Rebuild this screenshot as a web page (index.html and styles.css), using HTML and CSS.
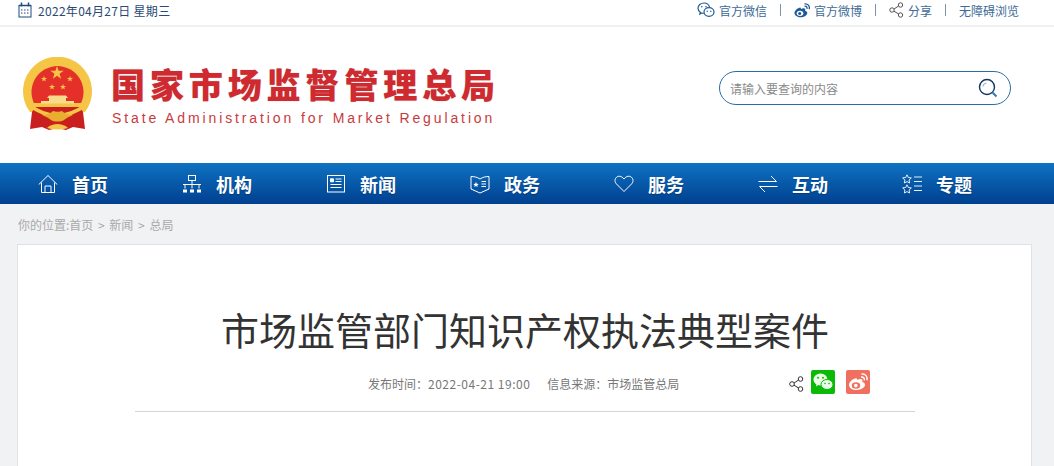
FILE: index.html
```html
<!DOCTYPE html>
<html lang="zh-CN">
<head>
    <meta charset="UTF-8">
    <meta name="viewport" content="width=device-width, initial-scale=1.0">
    <title>市场监管部门知识产权执法典型案件</title>
    <link rel="stylesheet" href="styles.css">
</head>
<body>
    <!-- Top bar -->
    <div class="topbar">
        <div class="date">
            <svg class="date-icon" width="14" height="16" viewBox="0 0 14 16" fill="none" stroke="#1d4a80">
                <rect x="1" y="3.500" width="12" height="11.500"/>
                <path d="M3.500 0.500v4M10.500 0.500v4M1 3.500h12" stroke-width="1.500"/>
                <path d="M3 8h2M6 8h2M9 8h2M3 11h2M6 11h2M9 11h2" stroke-dasharray="1.500 1"/>
            </svg>
            <span>2022年04月27日 星期三</span>
        </div>
        <div class="toplinks">
            <span class="toplink">
                <svg width="18" height="16" viewBox="0 0 18 16" fill="none" stroke="#1d5a96" stroke-width="1.200">
                    <path d="M12.500 5.200C12 2.800 9.800 1 7 1 3.700 1 1 3.300 1 6.200c0 1.700.9 3.100 2.300 4.100l-.5 1.700 2-1c.6.200 1.200.3 1.900.3"/>
                    <ellipse cx="12" cy="10" rx="5" ry="4.300"/>
                    <circle cx="4.800" cy="4.800" r=".8" fill="#1d5a96" stroke="none"/>
                    <circle cx="9" cy="4.800" r=".8" fill="#1d5a96" stroke="none"/>
                    <circle cx="10.200" cy="9.200" r=".7" fill="#1d5a96" stroke="none"/>
                    <circle cx="13.800" cy="9.200" r=".7" fill="#1d5a96" stroke="none"/>
                </svg>
                官方微信
            </span>
            <i class="sep"></i>
            <span class="toplink">
                <svg width="16" height="15" viewBox="0 0 16 15">
                    <path d="M6.500 4.500C3.500 5 .5 7.700.5 10c0 2.500 3 4.300 6 4.300 3.800 0 6.800-2.100 6.800-4.300 0-1.600-1.500-2-2.200-2.300.5-1.500 0-2.500-1.400-2.500-1 0-2 .3-2.700.8-.2-.6-.2-1-.5-1.500z" fill="#1d5a96"/>
                    <ellipse cx="6" cy="10.300" rx="3.300" ry="2.600" fill="#fff"/>
                    <circle cx="5.700" cy="10.500" r="1.500" fill="#1d5a96"/>
                    <path d="M10.500 3.200c1.600-.3 2.900 1 2.500 2.700M10.500.9c3.300-.5 5.500 2.200 4.700 5.200" fill="none" stroke="#1d5a96" stroke-width="1.300"/>
                </svg>
                官方微博
            </span>
            <i class="sep"></i>
            <span class="toplink">
                <svg width="15" height="16" viewBox="0 0 15 16" fill="none" stroke="#555" stroke-width="1">
                    <circle cx="3" cy="8" r="2.200"/>
                    <circle cx="11.500" cy="3" r="2.200"/>
                    <circle cx="11.500" cy="13" r="2.200"/>
                    <path d="M5 7l4.600-3M5 9.200l4.600 2.800"/>
                </svg>
                分享
            </span>
            <i class="sep"></i>
            <span class="toplink">无障碍浏览</span>
        </div>
    </div>

    <!-- Logo and search -->
    <header class="header">
        <svg class="emblem" width="72" height="76" viewBox="0 0 72 76">
            <defs>
                <polygon id="star" points="0,-1 .225,-.309 .951,-.309 .363,.118 .588,.809 0,.382 -.588,.809 -.363,.118 -.951,-.309 -.225,-.309"/>
            </defs>
            <path d="M8 55A34.500 34.500 0 1 1 63 55z" fill="#f5c646"/>
            <path d="M11.900 46A26 26 0 1 1 59.100 46z" fill="#e5302a"/>
            <!-- drapes under the ring -->
            <path d="M13 50h45l3 5 2 17-12-2-7 3-8.500-2-8.500 2-7-3-12 2 2-17z" fill="#c9201f"/>
            <path d="M7 48Q35 69 64 48" fill="none" stroke="#f5c646" stroke-width="3.500"/>
            <path d="M20 58c5 0 9-2 11-4 2 1 7 1 9 0 2 2 6 4 11 4-4 2-7 3-9 5-3 2-10 2-13 0-2-2-5-3-9-5z" fill="#e9ae2e"/>
            <path d="M25 71c3-3 7-4 10.500-4s7.500 1 10.500 4c-7 2-14 2-21 0z" fill="#f5c646"/>
            <!-- gate -->
            <path d="M25 41l2-2.500h17l2 2.500zM27 41h17v3H27zM19 44h33v2.500H19z" fill="#f8dc8c"/>
            <!-- stars -->
            <g fill="#f5c646">
                <use href="#star" transform="translate(35 16) scale(7)"/>
                <use href="#star" transform="translate(22 22) scale(3.200)"/>
                <use href="#star" transform="translate(48 22) scale(3.200)"/>
                <use href="#star" transform="translate(30 30) scale(3.200)"/>
                <use href="#star" transform="translate(41 30) scale(3.200)"/>
            </g>
        </svg>
        <div class="brand">
            <div class="brand-cn">国家市场监督管理总局</div>
            <div class="brand-en">State Administration for Market Regulation</div>
        </div>
        <div class="search">
            <span class="search-text">请输入要查询的内容</span>
            <svg width="20" height="20" viewBox="0 0 20 20" fill="none">
                <circle cx="9" cy="9" r="7.500" stroke="#12365f" stroke-width="1.400"/>
                <path d="M5 8.500a4 4 0 0 1 3.500-3.500" stroke="#9db8d2" stroke-width="1.200"/>
                <path d="M14 14l4.500 4.500" stroke="#2f78b8" stroke-width="2"/>
            </svg>
        </div>
    </header>

    <!-- Main nav -->
    <nav class="nav">
        <a class="nav-item">
            <svg width="20" height="20" viewBox="0 0 20 20" fill="none" stroke="#fff">
                <path d="M.8 10.500L10 1.500l9.200 9M3.500 8.500v10h13v-10M7 18.500v-6.500h6v6.500"/>
            </svg>
            首页
        </a>
        <a class="nav-item">
            <svg width="20" height="20" viewBox="0 0 20 20" fill="none" stroke="#fff">
                <rect x="6.500" y="1.500" width="7" height="5"/>
                <path d="M1 10.500h18M10 6.500v4M3 10.500v4M10 10.500v4M17 10.500v4"/>
                <path d="M1 15.500h4v3H1zM8 15.500h4v3H8zM15 15.500h4v3h-4z" fill="#fff" stroke="none"/>
            </svg>
            机构
        </a>
        <a class="nav-item">
            <svg width="20" height="20" viewBox="0 0 20 20" fill="none" stroke="#fff">
                <rect x="1.500" y="1.500" width="17" height="16.500"/>
                <path d="M4.500 4.800h3v3h-3z" fill="#fff"/>
                <path d="M9.500 5h6M9.500 7.500h6M4.500 10.500h11M4.500 13.500h11"/>
            </svg>
            新闻
        </a>
        <a class="nav-item">
            <svg width="20" height="20" viewBox="0 0 20 20" fill="none" stroke="#fff">
                <path d="M1 2.500c3 0 6 .5 9 2.500 3-2 6-2.500 9-2.500v12.500l-9 4-9-4z"/>
                <path d="M6 8l.8 1.700 1.900.2-1.400 1.300.4 1.800-1.700-.9-1.700.9.4-1.800-1.400-1.300 1.900-.2z" fill="#fff" stroke="none"/>
                <path d="M11.500 7.500h4.500M11.500 10h4.500M11.500 12.500h4.500"/>
            </svg>
            政务
        </a>
        <a class="nav-item">
            <svg width="20" height="20" viewBox="0 0 20 20" fill="none" stroke="#fff">
                <path d="M10 17.500L2.500 10C.5 8 .5 5 2.500 3.300 4.500 1.500 7.800 2 10 5c2.200-3 5.500-3.500 7.500-1.700 2 1.700 2 4.700 0 6.700z"/>
            </svg>
            服务
        </a>
        <a class="nav-item">
            <svg width="20" height="20" viewBox="0 0 20 20" fill="none" stroke="#fff">
                <path d="M.5 7.500h18L13 2M19.500 12.500H1.500L7 18"/>
            </svg>
            互动
        </a>
        <a class="nav-item">
            <svg width="20" height="20" viewBox="0 0 20 20" fill="none" stroke="#fff" stroke-width=".9">
                <path d="M5 .8l1.300 2.700 3 .4-2.200 2.100.5 3L5 7.600 2.400 9l.5-3L.7 3.900l3-.4zM5 10.800l1.300 2.700 3 .4-2.200 2.100.5 3L5 17.600 2.400 19l.5-3-2.200-2.100 3-.4z"/>
                <path d="M12 3h8M12 7.500h8M12 12h8M12 16.500h8"/>
            </svg>
            专题
        </a>
    </nav>

    <!-- Breadcrumb -->
    <div class="crumbs">你的位置:首页 &gt; 新闻 &gt; 总局</div>

    <!-- Article -->
    <main class="card">
        <h1 class="title">市场监管部门知识产权执法典型案件</h1>
        <div class="meta">
            <div class="meta-text">
                <span>发布时间：<span class="num">2022-04-21 19:00</span></span>
                <span>信息来源：市场监管总局</span>
            </div>
            <div class="share">
                <svg class="share-icon" width="15" height="16" viewBox="0 0 15 16" fill="none" stroke="#333" stroke-width="1">
                    <circle cx="3" cy="8" r="2.300"/>
                    <circle cx="11.500" cy="3" r="2.300"/>
                    <circle cx="11.500" cy="13" r="2.300"/>
                    <path d="M5 7l4.600-3M5 9.200l4.600 2.800"/>
                </svg>
                <svg class="share-btn" width="24" height="24" viewBox="0 0 24 24">
                    <rect width="24" height="24" rx="2" fill="#09bb07"/>
                    <ellipse cx="9.500" cy="9.500" rx="7" ry="6" fill="#e9fbe6"/>
                    <path d="M5.500 13.500l-.5 3 3-2z" fill="#e9fbe6"/>
                    <ellipse cx="16" cy="14.500" rx="6" ry="5" fill="#e9fbe6" stroke="#09bb07"/>
                    <circle cx="7" cy="7.800" r="1" fill="#09bb07"/>
                    <circle cx="12" cy="7.800" r="1" fill="#09bb07"/>
                    <circle cx="14" cy="13.500" r=".8" fill="#09bb07"/>
                    <circle cx="18" cy="13.500" r=".8" fill="#09bb07"/>
                </svg>
                <svg class="share-btn" width="24" height="24" viewBox="0 0 24 24">
                    <rect width="24" height="24" rx="2" fill="#f0705f"/>
                    <path d="M10.500 8C6.500 9 3 12 3 15c0 3 3.500 5 7.500 5 4.800 0 8.500-2.500 8.500-5.200 0-2-1.900-2.500-2.700-2.800.6-1.800 0-2.900-1.700-2.900-1.200 0-2.300.4-3.300.9-.1-.8 0-1.400-1.800-2z" fill="#fff"/>
                    <ellipse cx="10" cy="15.500" rx="4.200" ry="3.200" fill="#f0705f"/>
                    <circle cx="9.800" cy="15.600" r="1.800" fill="#fff"/>
                    <path d="M15 7c2.300-.4 3.800 1.300 3.300 3.300M15.500 4c4-.5 6.400 2.700 5.400 6.300" fill="none" stroke="#fff" stroke-width="1.400"/>
                </svg>
            </div>
        </div>
    </main>
</body>
</html>
```

FILE: styles.css
```css
/* Global Styles */
html, body {
    height: 100%;
}

body {
    margin: 0;
    background-color: #f1f2f4;
    font-family: "Noto Sans CJK SC", "Noto Sans", sans-serif;
    font-size: 12px;
    overflow: hidden;
}

svg {
    display: block;
    flex-shrink: 0;
}

/* Top bar */
.topbar {
    display: flex;
    justify-content: space-between;
    align-items: center;
    height: 20px;
    padding: 0 35px 5px 18px;
    background: #ffffff;
    border-bottom: 2px solid #f0f0f0;
}

.date {
    display: flex;
    align-items: center;
    gap: 6px;
    letter-spacing: 0.300px;
    color: #2a4a75;
}

.toplinks {
    display: flex;
    align-items: center;
    color: #3d6a96;
}

.toplink {
    display: flex;
    align-items: center;
    gap: 4px;
}

.sep {
    width: 1px;
    height: 12px;
    margin: 0 13px;
    background: #7d93aa;
}

/* Header */
.header {
    display: flex;
    align-items: center;
    height: 136px;
    padding: 0 43px 0 22px;
    background: #ffffff;
}

.emblem {
    margin-right: 17px;
}

.brand-cn {
    font-size: 34px;
    font-weight: 900;
    line-height: 40px;
    letter-spacing: 4.900px;
    white-space: nowrap;
    color: #cf2a2f;
    text-shadow: 0 0 1px rgba(120, 20, 20, 0.4);
}

.brand-en {
    margin-top: 5px;
    padding-left: 1px;
    font-family: "Liberation Sans", sans-serif;
    font-size: 14px;
    line-height: 18px;
    letter-spacing: 2.880px;
    white-space: nowrap;
    color: #c93a3e;
}

.search {
    display: flex;
    justify-content: space-between;
    align-items: center;
    box-sizing: border-box;
    width: 292px;
    height: 34px;
    margin: 0 0 14px auto;
    padding: 0 12px 0 10px;
    border: 1px solid #2a6ea8;
    border-radius: 17px;
}

.search-text {
    color: #8a8a8a;
}

/* Main nav */
.nav {
    display: flex;
    height: 41px;
    padding-left: 38px;
    background: linear-gradient(to bottom, #0f72c2, #00408f);
}

.nav-item {
    display: flex;
    align-items: center;
    gap: 14px;
    width: 144px;
    color: #ffffff;
    font-size: 18px;
    font-weight: 700;
    text-shadow: 0 1px 1px rgba(0, 30, 80, 0.4);
}

/* Breadcrumb */
.crumbs {
    height: 40px;
    padding-left: 18px;
    line-height: 42px;
    word-spacing: 2px;
    color: #a9a9a9;
}

/* Article */
.card {
    box-sizing: border-box;
    width: 1015px;
    height: 222px;
    margin-left: 17px;
    padding: 0 116px 0 117px;
    background: #ffffff;
    border: 1px solid #dfe1e6;
    border-bottom: none;
}

.title {
    margin: 56px 0 0;
    font-size: 38px;
    font-weight: 400;
    line-height: 56px;
    text-align: center;
    color: #333333;
}

.meta {
    display: flex;
    justify-content: space-between;
    align-items: center;
    height: 52px;
    padding: 0 45px 2px 233px;
    border-bottom: 1px solid #d4d4d4;
}

.meta-text {
    display: flex;
    gap: 17px;
    color: #777777;
}

.num {
    letter-spacing: 0.500px;
}

.share {
    display: flex;
    align-items: center;
    margin-bottom: 2px;
}

.share-icon {
    margin-top: 4px;
}

.share-btn {
    margin-left: 7px;
}

.share-btn:last-child {
    margin-left: 11px;
}
```
